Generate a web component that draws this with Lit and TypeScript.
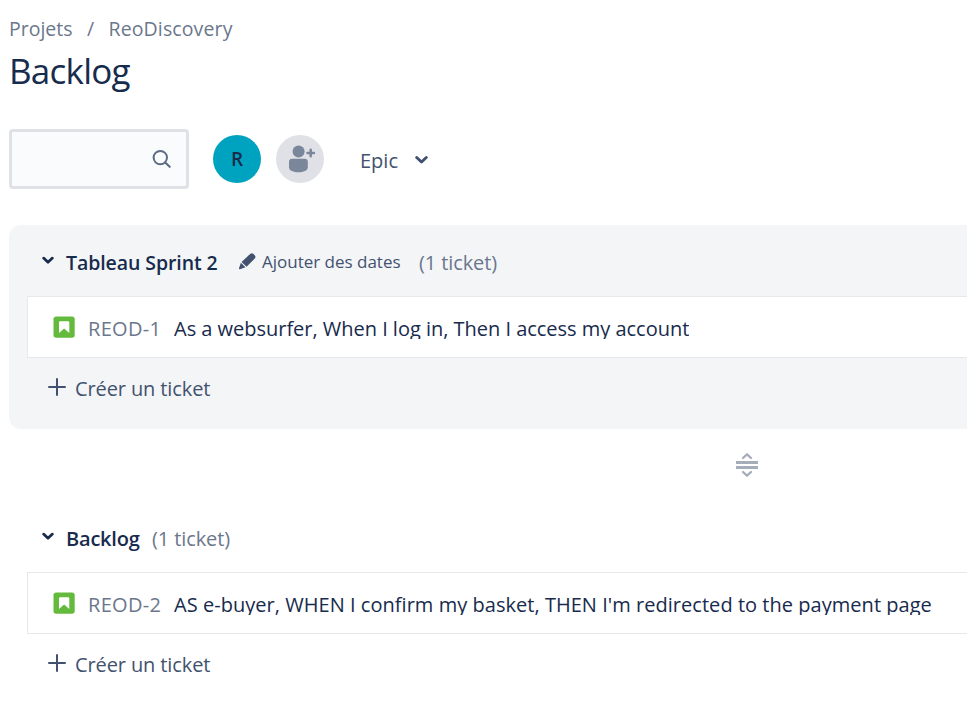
import { LitElement, html, css, svg } from "lit";
import { customElement, property } from "lit/decorators.js";

const chevron = svg`<path d="M1.6 2.1 6 6.3 10.4 2.1" fill="none" stroke="currentColor" stroke-width="2.7" stroke-linecap="round" stroke-linejoin="round"/>`;

interface Ticket {
  key: string;
  summary: string;
  kind: string;
}

@customElement("backlog-section")
class BacklogSection extends LitElement {
  @property() heading = "";
  @property({ type: Boolean, reflect: true }) sprint = false;
  @property({ attribute: false }) tickets: Ticket[] = [];

  static styles = css`
    :host {
      display: block;
      box-sizing: border-box;
      height: 204px;
      padding: 24px 0 0 18px;
      border-radius: 12px 0 0 12px;
      color: #42526e;
      font-size: 20px;
      line-height: 28px;
    }
    :host([sprint]) {
      background: #f4f5f7;
    }
    .header {
      display: flex;
      height: 28px;
      padding-left: 15px;
      white-space: nowrap;
    }
    .chevron {
      flex: none;
      width: 12px;
      height: 8px;
      margin: 7px 12px 0 0;
      color: #172b4d;
    }
    .title {
      width: 74px;
      color: #172b4d;
      font-size: 20px;
      font-weight: 600;
      letter-spacing: -0.2px;
    }
    :host([sprint]) .title {
      width: 152px;
      font-size: 19.5px;
      letter-spacing: -0.08px;
    }
    .dates {
      display: flex;
      width: 163px;
      margin: -1px 0 0 20px;
      font-size: 17px;
      letter-spacing: -0.01px;
    }
    .pencil {
      flex: none;
      width: 18px;
      height: 18px;
      margin: 4px 6px 0 0;
    }
    .count {
      margin-left: 12px;
      color: #6b778c;
      letter-spacing: -0.1px;
    }
    :host([sprint]) .count {
      margin-left: 18px;
    }
    .list {
      margin: 19px 0 17px;
      border: 1px solid #e6e8ec;
      border-right: 0;
      background: #fff;
    }
    .row {
      display: flex;
      box-sizing: border-box;
      height: 60px;
      padding: 18px 0 0 25px;
      white-space: nowrap;
    }
    .story {
      flex: none;
      width: 22px;
      height: 22px;
      margin: 1px 13px 0 0;
    }
    .key {
      width: 86px;
      flex: none;
      color: #6b778c;
      letter-spacing: 0.3px;
    }
    .summary {
      height: 24px;
      overflow: hidden;
      color: #172b4d;
    }
    .summary.user {
      letter-spacing: -0.02px;
    }
    .summary.buyer {
      letter-spacing: 0.036px;
    }
    .create {
      display: flex;
      padding-left: 20px;
      letter-spacing: -0.11px;
    }
    .plus {
      width: 20px;
      height: 20px;
      margin: 2px 8px 0 0;
    }
  `;

  render() {
    return html`
      <div class="header">
        <svg class="chevron" viewBox="0 0 12 8">${chevron}</svg>
        <span class="title">${this.heading}</span>
        ${this.sprint
          ? html`<span class="dates">
              <svg class="pencil" viewBox="0 0 18 18" fill="currentColor">
                <path d="M12.2 1.9Q13.8.6 15.3 1.8L16.9 3.4Q18.2 4.9 16.8 6.4L8.6 14.7 3.6 9.9Z" />
                <path d="M2.9 10.8 7.5 15.3 2 17.3Q.7 17.5 1 16.2Z" />
              </svg>
              Ajouter des dates</span>`
          : ""}
        <span class="count">(${this.tickets.length} ticket)</span>
      </div>
      <div class="list">
        ${this.tickets.map(
          (t) => html`<div class="row">
            <svg class="story" viewBox="0 0 22 22">
              <rect x=".5" y=".4" width="21.2" height="21.4" rx="2.8" fill="#63ba3c" />
              <path d="M6 6.4Q6 5.2 7.2 5.2H15.1Q16.3 5.2 16.3 6.4V17L11.1 12.6 6 17Z" fill="#fff" />
            </svg>
            <span class="key">${t.key}</span>
            <span class="summary ${t.kind}">${t.summary}</span>
          </div>`,
        )}
      </div>
      <div class="create">
        <svg class="plus" viewBox="0 0 20 20" fill="none" stroke="currentColor" stroke-width="2" stroke-linecap="round">
          <path d="M10 2V18M2 10H18" />
        </svg>
        Créer un ticket
      </div>
    `;
  }
}

@customElement("app-root")
class AppRoot extends LitElement {
  static styles = css`
    :host {
      display: block;
      box-sizing: border-box;
      height: 718px;
      padding: 15px 0 0 9px;
      overflow: hidden;
      background: #fff;
      color: #42526e;
      font: 20px/28px "Open Sans", "Noto Sans", sans-serif;
    }
    .crumbs {
      display: flex;
      color: #6b778c;
      font-size: 19.5px;
      letter-spacing: 0;
    }
    .crumbs span:nth-child(1) {
      width: 78px;
    }
    .crumbs span:nth-child(2) {
      width: 21.5px;
    }
    .crumbs span:nth-child(3) {
      letter-spacing: 0.12px;
    }
    h1 {
      margin: 8px 0 38px;
      color: #172b4d;
      font-size: 35px;
      font-weight: 400;
      line-height: 40px;
      letter-spacing: -0.75px;
    }
    .toolbar {
      display: flex;
      align-items: center;
      height: 60px;
      margin-bottom: 36px;
    }
    .search {
      display: flex;
      justify-content: flex-end;
      align-items: center;
      box-sizing: border-box;
      width: 180px;
      height: 60px;
      padding-right: 13px;
      border: 3px solid #dfe1e6;
      border-radius: 4px;
      background: #fafbfc;
    }
    .avatar {
      display: flex;
      justify-content: center;
      align-items: center;
      width: 48px;
      height: 48px;
      margin-left: 24px;
      border-radius: 50%;
      background: #00a3bf;
      color: #172b4d;
      font-size: 19px;
      font-weight: 600;
    }
    .add {
      margin-left: 15px;
      background: #dfe1e6;
    }
    .epic {
      margin: 3px 0 0 36px;
      width: 54.5px;
    }
    .down {
      width: 13px;
      height: 9px;
      margin-top: 1px;
    }
    .divider {
      display: flex;
      height: 72px;
      padding-left: 727px;
      align-items: center;
    }
  `;

  render() {
    return html`
      <nav class="crumbs"><span>Projets</span><span>/</span><span>ReoDiscovery</span></nav>
      <h1>Backlog</h1>
      <div class="toolbar">
        <div class="search">
          <svg width="22" height="22" viewBox="0 0 22 22" fill="none" stroke="#5e6c84" stroke-width="2" stroke-linecap="round">
            <circle cx="9.3" cy="9.6" r="6.7" />
            <path d="M14.2 14.5 18.7 18.8" stroke-width="2.2" />
          </svg>
        </div>
        <div class="avatar">R</div>
        <div class="avatar add">
          <svg width="48" height="48" viewBox="0 0 48 48" fill="#7a869a">
            <circle cx="22.6" cy="16.4" r="6" />
            <path d="M13 26.8Q13 23.8 16.2 23.8H28.6Q31.8 23.8 31.8 26.8V32.5C31.8 38.8 13 38.8 13 32.5Z" />
            <path d="M34.7 14.8V21.2M31.5 18H37.9" stroke="#7a869a" stroke-width="2.5" stroke-linecap="round" />
          </svg>
        </div>
        <span class="epic">Epic</span>
        <svg class="down" viewBox="0 0 12 8">${chevron}</svg>
      </div>
      <backlog-section
        sprint
        heading="Tableau Sprint 2"
        .tickets=${[{ key: "REOD-1", kind: "user", summary: "As a websurfer, When I log in, Then I access my account" }]}
      ></backlog-section>
      <div class="divider">
        <svg width="22" height="26" viewBox="0 0 22 26" fill="none" stroke="#a5adba">
          <path d="M0 10.5H22M0 15.5H22" stroke-width="3" />
          <path d="M7 6 11 2.3 15 6M7 20 11 23.7 15 20" stroke-width="2.3" stroke-linecap="round" stroke-linejoin="round" />
        </svg>
      </div>
      <backlog-section
        heading="Backlog"
        .tickets=${[{ key: "REOD-2", kind: "buyer", summary: "AS e-buyer, WHEN I confirm my basket, THEN I'm redirected to the payment page" }]}
      ></backlog-section>
    `;
  }
}
